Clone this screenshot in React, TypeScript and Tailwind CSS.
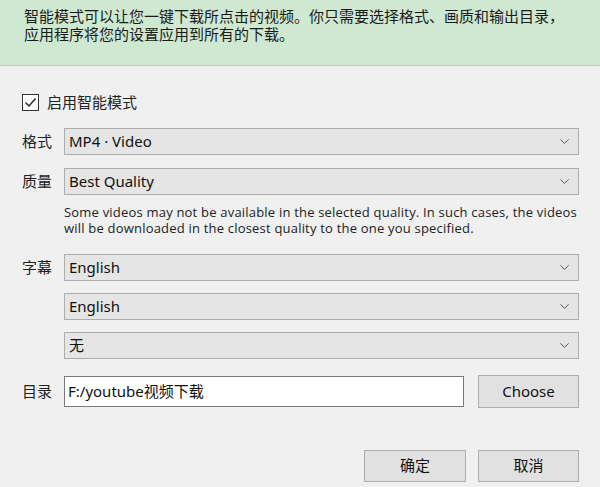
import { ChevronDown } from 'lucide-react';

const font = { fontFamily: '"Noto Sans", "Noto Sans CJK SC", sans-serif' };

function Select({ value }: { value: string }) {
  return (
    <div className="flex-1 h-[27px] flex items-center justify-between bg-[#e5e5e5] border border-[#adadad] pl-[4px] pr-[6px]">
      <span className="text-[15px] text-[#111]">{value}</span>
      <ChevronDown size={15} strokeWidth={1.3} className="text-[#333]" />
    </div>
  );
}

function Row({ label, children }: { label?: string; children: React.ReactNode }) {
  return (
    <div className="flex items-center">
      <div className="w-[42px] text-[15px] text-[#222]">{label}</div>
      {children}
    </div>
  );
}

export default function App() {
  return (
    <div className="relative w-[600px] h-[487px] bg-[#f0f0f0] overflow-hidden" style={font}>
      <div className="h-[66px] bg-[#cfe8d2] border-b border-[#c4c4c4] px-[24px] pt-[7px] text-[15px] leading-[18px] text-[#1a1a1a]">
        <p>智能模式可以让您一键下载所点击的视频。你只需要选择格式、画质和输出目录，</p>
        <p>应用程序将您的设置应用到所有的下载。</p>
      </div>

      <div className="px-[22px] pr-[21px] pt-[25px] flex flex-col">
        <label className="flex items-center gap-[8px]">
          <span className="w-[17px] h-[17px] border border-[#333] bg-white flex items-center justify-center">
            <svg width="13" height="13" viewBox="0 0 13 13">
              <path d="M1.5 6.5 L5 10 L11.5 2.5" fill="none" stroke="#222" strokeWidth="1.4" />
            </svg>
          </span>
          <span className="text-[15px] text-[#222]">启用智能模式</span>
        </label>

        <div className="mt-[14px] flex flex-col gap-[13px]">
          <Row label="格式"><Select value="MP4 · Video" /></Row>
          <Row label="质量"><Select value="Best Quality" /></Row>
        </div>

        <p className="ml-[42px] mr-[-12px] mt-[9px] text-[13px] tracking-[0.2px] leading-[16px] text-[#222]" style={{ fontFamily: '"Open Sans", sans-serif' }}>
          Some videos may not be available in the selected quality. In such cases, the videos will be downloaded in the closest quality to the one you specified.
        </p>

        <div className="mt-[18px] flex flex-col gap-[12px]">
          <Row label="字幕"><Select value="English" /></Row>
          <Row><Select value="English" /></Row>
          <Row><Select value="无" /></Row>
        </div>

        <div className="mt-[16px] flex items-center">
          <div className="w-[42px] text-[15px] text-[#222]">目录</div>
          <div className="w-[400px] h-[31px] bg-white border border-[#7a7a7a] flex items-center px-[3px] text-[15px] text-[#111]">
            F:/youtube视频下载
          </div>
          <button className="ml-[14px] w-[101px] h-[33px] bg-[#e1e1e1] border border-[#adadad] text-[15px] text-[#111]">
            Choose
          </button>
        </div>

        <div className="mt-[42px] flex justify-end gap-[12px]">
          <button className="w-[102px] h-[32px] bg-[#e1e1e1] border border-[#adadad] text-[15px] text-[#111]">确定</button>
          <button className="w-[101px] h-[32px] bg-[#e1e1e1] border border-[#adadad] text-[15px] text-[#111]">取消</button>
        </div>
      </div>
    </div>
  );
}
